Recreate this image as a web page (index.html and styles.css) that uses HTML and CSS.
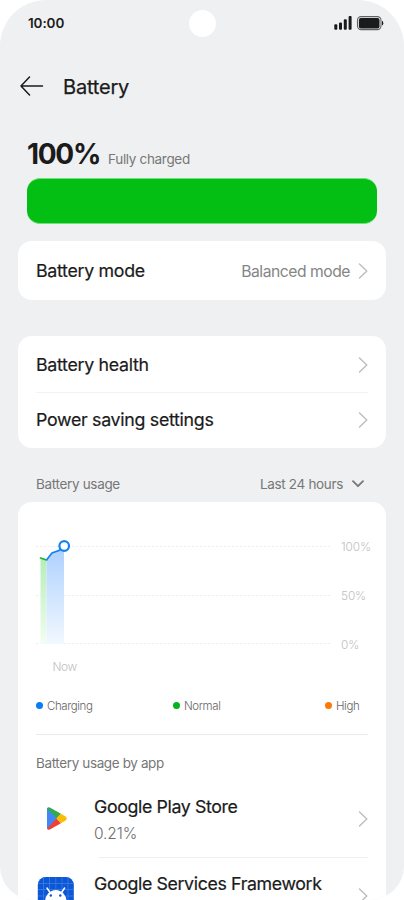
FILE: index.html
```html
<!DOCTYPE html>
<html lang="en">
<head>
<meta charset="utf-8">
<title>Battery</title>
<link rel="stylesheet" href="styles.css">
</head>
<body>
<div class="phone">
  <header class="status">
    <span class="time">10:00</span>
    <span class="camera"></span>
    <svg class="status-icons" width="50" height="16" viewBox="0 0 50 16">
      <g fill="#1b1b1b">
        <rect x="0.3" y="9.2" width="3" height="5.6" rx="1"/>
        <rect x="5" y="7.6" width="3" height="7.2" rx="1"/>
        <rect x="9.8" y="4.2" width="3" height="10.6" rx="1"/>
        <rect x="14.6" y="1" width="3" height="13.8" rx="1"/>
        <rect x="24.9" y="2.9" width="20.6" height="10.6" rx="2"/>
        <path d="M48 5.8q1.3.4 1.3 2.4T48 10.6z"/>
      </g>
      <rect x="23.5" y="1.6" width="23.5" height="13" rx="3.6" fill="none" stroke="#606162" stroke-width="1.1"/>
    </svg>
  </header>

  <nav class="titlebar">
    <svg width="24" height="20" viewBox="0 0 24 20" fill="none" stroke="#1b1b1b" stroke-width="1.5" stroke-linecap="round" stroke-linejoin="round"><path d="M22.5 10H1M9.5 1 1 10l8.500 9"/></svg>
    <h1>Battery</h1>
  </nav>

  <section class="level">
    <span class="percent">100%</span><span class="state">Fully charged</span>
  </section>
  <div class="meter"></div>

  <section class="card mode">
    <div class="row"><span class="label">Battery mode</span><span class="value">Balanced mode</span>
      <svg class="chev" viewBox="0 0 10 16"><path d="m1.500 1 7.300 7-7.300 7"/></svg></div>
  </section>

  <section class="card settings">
    <div class="row"><span class="label">Battery health</span>
      <svg class="chev" viewBox="0 0 10 16"><path d="m1.500 1 7.300 7-7.300 7"/></svg></div>
    <div class="row"><span class="label">Power saving settings</span>
      <svg class="chev" viewBox="0 0 10 16"><path d="m1.500 1 7.300 7-7.300 7"/></svg></div>
  </section>

  <div class="usage-head">
    <span class="sub">Battery usage</span><span class="range">Last 24 hours</span>
    <svg width="12" height="8" viewBox="0 0 12 8" fill="none" stroke="#777" stroke-width="1.8" stroke-linecap="round" stroke-linejoin="round"><path d="m1 1.200 5 5 5-5"/></svg>
  </div>

  <section class="card usage">
    <div class="chart">
      <svg width="294" height="112" viewBox="0 2 294 112">
        <defs>
          <linearGradient id="blue" x1="0" y1="0" x2="0" y2="1"><stop offset="0" stop-color="#acd0ff"/><stop offset="1" stop-color="#f2f8ff"/></linearGradient>
          <linearGradient id="green" x1="0" y1="0" x2="0" y2="1"><stop offset="0" stop-color="#b5edb8"/><stop offset="1" stop-color="#f3fdf3"/></linearGradient>
        </defs>
        <path d="M0 10.500h294M0 59.500h294M0 107.500h294" stroke="#f0f0f0" stroke-dasharray="2.500 1.500"/>
        <path d="M4.500 22 10.500 24V108h-6z" fill="url(#green)"/>
        <path d="M10.500 24 16 17l6-3 6-4V108H10.500z" fill="url(#blue)"/>
        <path d="m4.500 22 6 2" fill="none" stroke="#16b52b" stroke-width="1.700" stroke-linecap="round"/>
        <path d="m10.500 24 5.500-7 7-2.500 5-4" fill="none" stroke="#1682ef" stroke-width="1.700"/>
        <circle cx="28.200" cy="10" r="4.800" fill="#fff" stroke="#1682ef" stroke-width="2.200"/>
      </svg>
      <div class="axis"><span>100%</span><span>50%</span><span>0%</span></div>
    </div>
    <div class="now">Now</div>
    <div class="legend">
      <span class="key charging">Charging</span><span class="key normal">Normal</span><span class="key high">High</span>
    </div>
    <h2 class="sub by-app">Battery usage by app</h2>
    <div class="app">
      <svg class="icon" width="40" height="40" viewBox="0 0 40 40">
        <path d="M11.500 9.500v20L21 19.500z" fill="#4285f4" stroke="#4285f4" stroke-width="1"/>
        <path d="M11 9.300q1-1.500 2.800-.8L25 14.800 20.500 19.700z" fill="#34a853"/>
        <path d="M11 29.700q1 1.500 2.800.8L25 24.200 20.500 19.300z" fill="#ea4335"/>
        <path d="m25 14.800 4.500 2.600q2.400 2.100 0 4.200L25 24.200l-4.700-4.700z" fill="#fbbc04"/>
      </svg>
      <div class="info"><span class="label">Google Play Store</span><span class="pct">0.21%</span></div>
      <svg class="chev" viewBox="0 0 10 16"><path d="m1.500 1 7.300 7-7.300 7"/></svg>
    </div>
    <div class="app">
      <svg class="icon" width="40" height="40" viewBox="0 0 40 40">
        <rect x="1.800" y="1" width="36" height="38" rx="8" fill="#0b57d6"/>
        <path d="M7.500 1v38M13.500 1v38M19.800 1v38M26 1v38M32 1v38M2 7.500h36M2 13.500h36M2 20h36" stroke="#3e7be4" stroke-width=".8"/>
        <path d="M9 26a10.800 12 0 0 1 21.600 0z" fill="#fff"/>
        <path d="m11 12 3 4.500M28.600 12l-3 4.500" stroke="#fff" stroke-width="1.500" stroke-linecap="round"/>
        <circle cx="14.800" cy="19.500" r="1.200" fill="#0b57d6"/><circle cx="24.300" cy="19.500" r="1.200" fill="#0b57d6"/>
      </svg>
      <div class="info"><span class="label">Google Services Framework</span></div>
      <svg class="chev" viewBox="0 0 10 16"><path d="m1.500 1 7.300 7-7.300 7"/></svg>
    </div>
  </section>
</div>
</body>
</html>
```
FILE: styles.css
```css
* { box-sizing: border-box; }
body { margin: 0; background: #fff; font-family: Inter, "Liberation Sans", sans-serif; color: #1b1b1b; }
.phone { width: 404px; height: 900px; overflow: hidden; background: #eff0f2; border-radius: 46px 46px 34px 34px; display: flex; flex-direction: column; white-space: nowrap; }
.phone > * { flex-shrink: 0; }
svg { display: block; flex: none; }
h1, h2 { margin: 0; font-weight: 400; }

.status { height: 46px; display: grid; grid-template-columns: 1fr 27px 1fr; align-items: center; padding: 0 20px 0 28px; }
.time { font-size: 13.5px; font-weight: 600; letter-spacing: -.1px; }
.camera { width: 27px; height: 27px; border-radius: 50%; background: #fff; margin: 1px 0 0 -4px; }
.status-icons { justify-self: end; }

.titlebar { height: 80px; display: flex; align-items: center; padding-left: 20px; gap: 19px; }
.titlebar h1 { font-size: 20px; line-height: 28px; letter-spacing: -.2px; -webkit-text-stroke: .25px; padding-top: 1px; }

.level { height: 52px; display: flex; align-items: baseline; padding: 11px 27px 0; gap: 8px; }
.percent { font-size: 28px; line-height: 34px; font-weight: 700; letter-spacing: -1.300px; }
.state { font-size: 13.500px; color: #777; letter-spacing: -.33px; }
.meter { height: 45.500px; margin: 0 27px -.500px; border-radius: 13px; background: #03bf14; border: solid #6fe07c; border-width: 1px 0; }

.card { margin: 0 18px; padding: 0 18px; background: #fff; border-radius: 14px; }
.mode { margin-top: 18px; }
.mode .row { height: 59px; padding-top: 1px; }
.settings { margin-top: 36px; }
.settings .row { height: 56px; padding-top: 2px; }
.settings .row + .row { border-top: 1px solid #f2f2f2; padding: 0 0 2px; }
.row { display: flex; align-items: center; }
.label { font-size: 17.800px; line-height: 24px; letter-spacing: -.3px; -webkit-text-stroke: .2px; }
.value { margin-left: auto; margin-right: 8px; font-size: 15.700px; color: #858585; letter-spacing: -.48px; }
.chev { width: 10px; height: 16px; fill: none; stroke: #bdbdbd; stroke-width: 1.400; stroke-linecap: round; stroke-linejoin: round; }
.row .label + .chev { margin-left: auto; }

.usage-head { height: 54px; display: flex; align-items: center; padding: 18px 40px 0 36px; }
.sub { font-size: 13.500px; line-height: 18px; color: #777; letter-spacing: -.33px; }
.range { margin-left: auto; margin-right: 9px; font-size: 13.500px; color: #777; letter-spacing: -.33px; }

.usage { padding-top: 36px; height: 500px; overflow: hidden; }
.chart { display: flex; justify-content: space-between; height: 112px; }
.axis { width: 27px; display: flex; flex-direction: column; font-size: 11.800px; letter-spacing: -.1px; color: #c0c0c0; font-weight: 300; }
.axis span { flex: none; height: 49px; line-height: 18px; }
.now { margin: 9px 0 0 16.500px; font-size: 11.800px; line-height: 17px; letter-spacing: -.4px; color: #c0c0c0; font-weight: 300; }
.legend { display: grid; grid-template-columns: 137px 152px auto; height: 59px; align-items: center; padding-top: 1px; border-bottom: 1px solid #ebebeb; }
.key { display: flex; align-items: center; gap: 4px; font-size: 11.500px; letter-spacing: -.4px; font-weight: 300; color: #666; }
.key::before { content: ""; width: 7px; height: 7px; border-radius: 50%; background: #087cf5; }
.normal::before { background: #03b51a; }
.high::before { background: #fc7a08; }
.by-app { margin-top: 19px; height: 26px; letter-spacing: -.38px; }
.app { height: 77px; display: flex; align-items: center; position: relative; }
.app .icon { margin-right: 18px; }
.info { display: flex; flex-direction: column; flex: 1; height: 52px; padding-top: 2px; }
.info .label { letter-spacing: -.38px; }
.pct { font-size: 15.500px; line-height: 29px; font-weight: 300; letter-spacing: -.1px; color: #6c6c6c; }
.app + .app::before { content: ""; position: absolute; top: 0; left: 63px; right: 0; height: 1px; background: #f0f0f0; }
```
